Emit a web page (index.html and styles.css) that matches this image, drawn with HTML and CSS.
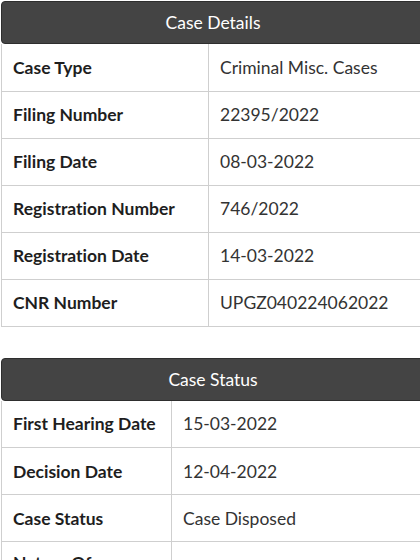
FILE: index.html
```html
<!DOCTYPE html>
<html>
<head>
<meta charset="utf-8">
<link rel="stylesheet" href="styles.css">
</head>
<body>
<div class="page">
  <section class="card">
    <div class="card-head">Case Details</div>
    <table class="info info-details">
      <tr><th>Case Type</th><td>Criminal Misc. Cases</td></tr>
      <tr><th>Filing Number</th><td>22395/2022</td></tr>
      <tr><th>Filing Date</th><td>08-03-2022</td></tr>
      <tr><th>Registration Number</th><td>746/2022</td></tr>
      <tr><th>Registration Date</th><td>14-03-2022</td></tr>
      <tr><th>CNR Number</th><td>UPGZ040224062022</td></tr>
    </table>
  </section>
  <section class="card">
    <div class="card-head">Case Status</div>
    <table class="info info-status">
      <tr><th>First Hearing Date</th><td>15-03-2022</td></tr>
      <tr><th>Decision Date</th><td>12-04-2022</td></tr>
      <tr><th>Case Status</th><td>Case Disposed</td></tr>
      <tr class="row-wrap"><th>Nature Of Disposal</th><td>Uncontested--Disposed</td></tr>
    </table>
  </section>
</div>
</body>
</html>
```
FILE: styles.css
```css
html, body {
  margin: 0;
  padding: 0;
  overflow: hidden;
  background: #fff;
}
.page {
  width: 424px;
  padding: 1px 0 0 1px;
  font-family: Lato, "Open Sans", sans-serif;
  font-variant-ligatures: none;
  display: flex;
  flex-direction: column;
  gap: 31px;
}
.card-head {
  background: #444;
  border: 1px solid #2e2e2e;
  border-radius: 4px;
  color: #fff;
  text-align: center;
  font-size: 17.5px;
  height: 41px;
  line-height: 41px;
}
.info {
  width: 100%;
  border-collapse: collapse;
  table-layout: fixed;
  font-size: 17.5px;
}
.info th, .info td {
  border: 1px solid #cfcfcf;
  text-align: left;
  padding: 0 11px;
  height: 47px;
  box-sizing: border-box;
}
.info tr:first-child th, .info tr:first-child td {
  border-top: none;
}
.info th {
  font-weight: 700;
  color: #1e1e1e;
}
.info td {
  font-weight: 400;
  color: #333;
}
.info .row-wrap th, .info .row-wrap td {
  padding-top: 10px;
  padding-bottom: 10px;
}
.info-details th { width: 207px; }
.info-status th { width: 170px; }
```
